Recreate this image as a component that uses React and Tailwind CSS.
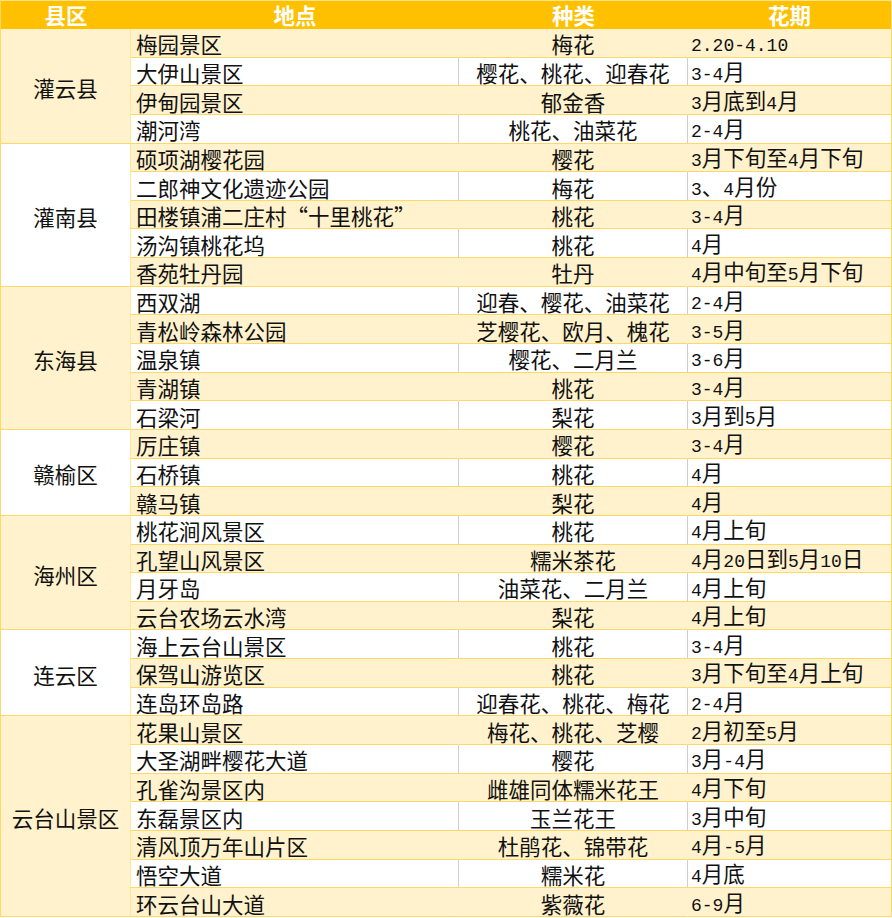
import React from "react";

const groups = [
  {
    county: "灌云县",
    span: "row-span-4",
    rows: [
      ["梅园景区", "梅花", "2.20-4.10"],
      ["大伊山景区", "樱花、桃花、迎春花", "3-4月"],
      ["伊甸园景区", "郁金香", "3月底到4月"],
      ["潮河湾", "桃花、油菜花", "2-4月"],
    ],
  },
  {
    county: "灌南县",
    span: "row-span-5",
    rows: [
      ["硕项湖樱花园", "樱花", "3月下旬至4月下旬"],
      ["二郎神文化遗迹公园", "梅花", "3、4月份"],
      ["田楼镇浦二庄村“十里桃花”", "桃花", "3-4月"],
      ["汤沟镇桃花坞", "桃花", "4月"],
      ["香苑牡丹园", "牡丹", "4月中旬至5月下旬"],
    ],
  },
  {
    county: "东海县",
    span: "row-span-5",
    rows: [
      ["西双湖", "迎春、樱花、油菜花", "2-4月"],
      ["青松岭森林公园", "芝樱花、欧月、槐花", "3-5月"],
      ["温泉镇", "樱花、二月兰", "3-6月"],
      ["青湖镇", "桃花", "3-4月"],
      ["石梁河", "梨花", "3月到5月"],
    ],
  },
  {
    county: "赣榆区",
    span: "row-span-3",
    rows: [
      ["厉庄镇", "樱花", "3-4月"],
      ["石桥镇", "桃花", "4月"],
      ["赣马镇", "梨花", "4月"],
    ],
  },
  {
    county: "海州区",
    span: "row-span-4",
    rows: [
      ["桃花涧风景区", "桃花", "4月上旬"],
      ["孔望山风景区", "糯米茶花", "4月20日到5月10日"],
      ["月牙岛", "油菜花、二月兰", "4月上旬"],
      ["云台农场云水湾", "梨花", "4月上旬"],
    ],
  },
  {
    county: "连云区",
    span: "row-span-3",
    rows: [
      ["海上云台山景区", "桃花", "3-4月"],
      ["保驾山游览区", "桃花", "3月下旬至4月上旬"],
      ["连岛环岛路", "迎春花、桃花、梅花", "2-4月"],
    ],
  },
  {
    county: "云台山景区",
    span: "row-span-7",
    rows: [
      ["花果山景区", "梅花、桃花、芝樱", "2月初至5月"],
      ["大圣湖畔樱花大道", "樱花", "3月-4月"],
      ["孔雀沟景区内", "雌雄同体糯米花王", "4月下旬"],
      ["东磊景区内", "玉兰花王", "3月中旬"],
      ["清风顶万年山片区", "杜鹃花、锦带花", "4月-5月"],
      ["悟空大道", "糯米花", "4月底"],
      ["环云台山大道", "紫薇花", "6-9月"],
    ],
  },
];

// half-width digits and full-width quotes, like the sheet's font
const Txt = ({ s }) =>
  s.split(/([\x21-\x7E]+|“|”)/).map((p, i) => {
    if (p === "“") return <span key={i} className="inline-block w-[1em] text-right">“</span>;
    if (p === "”") return <span key={i} className="inline-block w-[0.6em] text-left">”</span>;
    if (/^[\x21-\x7E]+$/.test(p))
      return (
        <span key={i} className="font-['Liberation_Mono',monospace] text-[18px]">
          {p}
        </span>
      );
    return p;
  });

const App = () => {
  let idx = 0;
  return (
    <div className="w-[892px] h-[918px] overflow-hidden bg-white font-['Noto_Sans_CJK_SC',sans-serif] text-[21.5px] leading-[24px] text-[#111]">
      <div className="grid w-[891px] grid-cols-[130px_328px_229px_204px] grid-rows-[29px_repeat(31,28.65px)] border-l border-[#FFD966]">
        <div className="flex items-center justify-center bg-[#FFC000] font-bold text-white border-t border-[#FFE28A]">县区</div>
        <div className="flex items-center justify-center bg-[#FFC000] font-bold text-white border-t border-[#FFE28A]">地点</div>
        <div className="flex items-center justify-center bg-[#FFC000] font-bold text-white border-t border-[#FFE28A]">种类</div>
        <div className="flex items-center justify-center bg-[#FFC000] font-bold text-white border-t border-r border-[#FFE28A]">花期</div>
        {groups.map((g, gi) => (
          <React.Fragment key={g.county}>
            <div
              className={`${g.span} flex items-center justify-center pt-[4px] border-r border-b border-r-[#FFE699] border-b-[#FFD966] ${
                gi % 2 === 0 ? "bg-[#FFF2CC]" : "bg-white"
              }`}
            >
              {g.county}
            </div>
            {g.rows.map((r, j) => {
              const yellow = idx++ % 2 === 0;
              const bg = yellow ? "bg-[#FFF2CC]" : "bg-white";
              const line = yellow ? "border-r-[#FFF2CC]" : "border-r-[#CFCFCF]";
              return (
                <React.Fragment key={j}>
                  <div className={`flex items-center whitespace-nowrap pl-[5px] pt-[3px] border-r border-b border-b-[#FFD966] ${bg} ${line}`}>
                    <Txt s={r[0]} />
                  </div>
                  <div className={`flex items-center justify-center whitespace-nowrap pt-[3px] border-r border-b border-b-[#FFD966] ${bg} ${line}`}>
                    {r[1]}
                  </div>
                  <div className={`flex items-center whitespace-nowrap pl-[3px] pt-[3px] border-r border-b border-b-[#FFD966] border-r-[#FFD966] ${bg}`}>
                    <span>
                      <Txt s={r[2]} />
                    </span>
                  </div>
                </React.Fragment>
              );
            })}
          </React.Fragment>
        ))}
      </div>
    </div>
  );
};

export default App;
